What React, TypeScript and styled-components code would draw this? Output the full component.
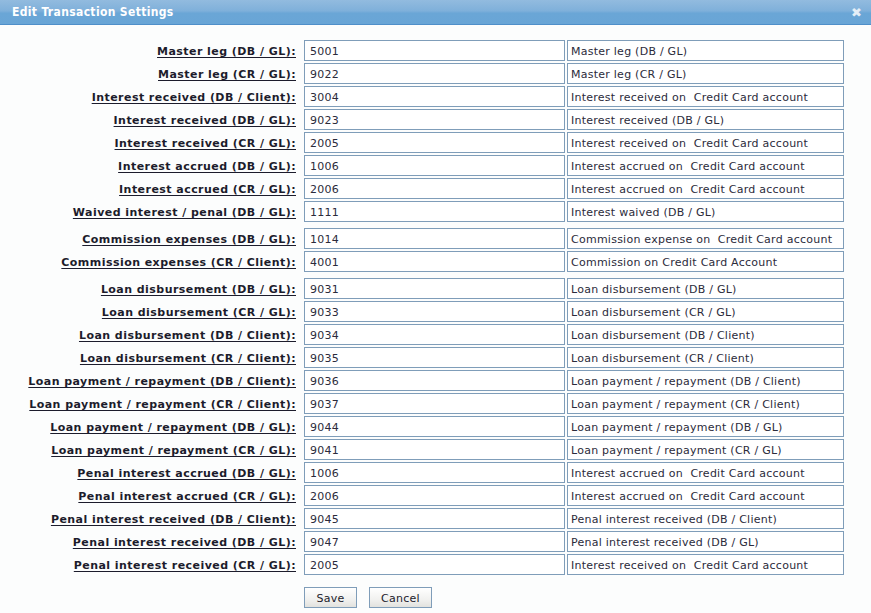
import styled, { createGlobalStyle } from "styled-components";

const GlobalStyle = createGlobalStyle`
  html, body {
    margin: 0;
    padding: 0;
    background: #fcfdfd;
  }
  body {
    font-family: "DejaVu Sans", sans-serif;
  }
`;

const Dialog = styled.div`
  width: 871px;
  height: 613px;
  background: #fcfdfd;
  overflow: hidden;
`;

const TitleBar = styled.div`
  height: 24px;
  display: flex;
  align-items: center;
  justify-content: space-between;
  padding: 0 9px 0 12px;
  background: linear-gradient(#92bbdf 0%, #7fb0da 45%, #6aa6d6 55%, #69a5d6 100%);
  border-bottom: 1px solid #4f8fc9;
  color: #fff;
`;

const Title = styled.span`
  font-family: "DejaVu Sans Condensed", "DejaVu Sans", sans-serif;
  font-size: 12px;
  font-weight: bold;
  letter-spacing: 0.35px;
`;

const Close = styled.span`
  font-size: 13px;
  font-weight: bold;
  color: #e4eef7;
  line-height: 1;
`;

const Body = styled.div`
  padding: 15px 0 0 0;
  display: flex;
  flex-direction: column;
`;

const Group = styled.div<{ $gapBefore?: boolean }>`
  display: flex;
  flex-direction: column;
  gap: 2px;
  margin-top: ${(p) => (p.$gapBefore ? "6px" : "0")};
`;

const Row = styled.div`
  display: flex;
  align-items: center;
  height: 21px;
`;

const Label = styled.label`
  width: 296px;
  margin-right: 8px;
  padding-top: 2px;
  text-align: right;
  font-size: 11px;
  font-weight: bold;
  letter-spacing: 0.45px;
  color: #1c1c2c;
  text-decoration: underline;
  text-underline-offset: 2px;
  white-space: nowrap;
`;

const Field = styled.div<{ $w: number; $ml?: number; $pl: number }>`
  box-sizing: border-box;
  width: ${(p) => p.$w}px;
  margin-left: ${(p) => p.$ml ?? 0}px;
  height: 21px;
  border: 1px solid #7f9db9;
  background: #fff;
  padding: 1px 0 0 ${(p) => p.$pl}px;
  display: flex;
  align-items: center;
  font-size: 11px;
  letter-spacing: 0.25px;
  color: #2b2b3b;
  white-space: nowrap;
  overflow: hidden;
`;

const Buttons = styled.div`
  display: flex;
  gap: 12px;
  margin: 12px 0 0 304px;
`;

const Button = styled.button<{ $w: number }>`
  box-sizing: border-box;
  width: ${(p) => p.$w}px;
  height: 21px;
  border: 1px solid #7f9db9;
  background: linear-gradient(#ffffff, #f1f1ef 60%, #e2e2de);
  font-family: inherit;
  font-size: 11px;
  letter-spacing: 0.25px;
  color: #1c1c2c;
  padding: 1px 0 0;
`;

type Item = [string, string, string];

const groups: Item[][] = [
  [
    ["Master leg (DB / GL):", "5001", "Master leg (DB / GL)"],
    ["Master leg (CR / GL):", "9022", "Master leg (CR / GL)"],
    ["Interest received (DB / Client):", "3004", "Interest received on  Credit Card account"],
    ["Interest received (DB / GL):", "9023", "Interest received (DB / GL)"],
    ["Interest received (CR / GL):", "2005", "Interest received on  Credit Card account"],
    ["Interest accrued (DB / GL):", "1006", "Interest accrued on  Credit Card account"],
    ["Interest accrued (CR / GL):", "2006", "Interest accrued on  Credit Card account"],
    ["Waived interest / penal (DB / GL):", "1111", "Interest waived (DB / GL)"],
  ],
  [
    ["Commission expenses (DB / GL):", "1014", "Commission expense on  Credit Card account"],
    ["Commission expenses (CR / Client):", "4001", "Commission on Credit Card Account"],
  ],
  [
    ["Loan disbursement (DB / GL):", "9031", "Loan disbursement (DB / GL)"],
    ["Loan disbursement (CR / GL):", "9033", "Loan disbursement (CR / GL)"],
    ["Loan disbursement (DB / Client):", "9034", "Loan disbursement (DB / Client)"],
    ["Loan disbursement (CR / Client):", "9035", "Loan disbursement (CR / Client)"],
    ["Loan payment / repayment (DB / Client):", "9036", "Loan payment / repayment (DB / Client)"],
    ["Loan payment / repayment (CR / Client):", "9037", "Loan payment / repayment (CR / Client)"],
    ["Loan payment / repayment (DB / GL):", "9044", "Loan payment / repayment (DB / GL)"],
    ["Loan payment / repayment (CR / GL):", "9041", "Loan payment / repayment (CR / GL)"],
    ["Penal interest accrued (DB / GL):", "1006", "Interest accrued on  Credit Card account"],
    ["Penal interest accrued (CR / GL):", "2006", "Interest accrued on  Credit Card account"],
    ["Penal interest received (DB / Client):", "9045", "Penal interest received (DB / Client)"],
    ["Penal interest received (DB / GL):", "9047", "Penal interest received (DB / GL)"],
    ["Penal interest received (CR / GL):", "2005", "Interest received on  Credit Card account"],
  ],
];

export default function App() {
  return (
    <Dialog>
      <GlobalStyle />
      <TitleBar>
        <Title>Edit Transaction Settings</Title>
        <Close>✖</Close>
      </TitleBar>
      <Body>
        {groups.map((g, gi) => (
          <Group key={gi} $gapBefore={gi > 0}>
            {g.map(([label, code, desc], i) => (
              <Row key={i}>
                <Label>{label}</Label>
                <Field $w={261} $pl={5}>{code}</Field>
                <Field $w={277} $ml={2} $pl={3}>
                  {desc.replace(/ {2}/g, "\u00a0 ")}
                </Field>
              </Row>
            ))}
          </Group>
        ))}
        <Buttons>
          <Button $w={53}>Save</Button>
          <Button $w={63}>Cancel</Button>
        </Buttons>
      </Body>
    </Dialog>
  );
}
